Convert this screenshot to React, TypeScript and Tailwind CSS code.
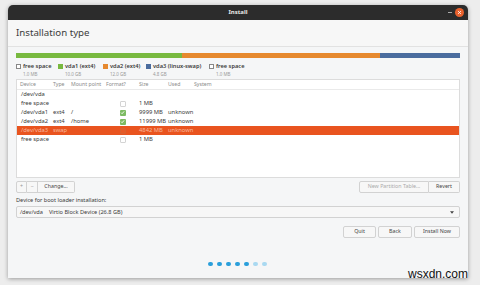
import React from "react";

const legend = [
  { label: "free space", size: "1.0 MB", color: "", w: "w-[42px]" },
  { label: "vda1 (ext4)", size: "10.0 GB", color: "bg-[#78b940]", w: "w-[45px]" },
  { label: "vda2 (ext4)", size: "12.0 GB", color: "bg-[#e6892f]", w: "w-[43px]" },
  { label: "vda3 (linux-swap)", size: "4.8 GB", color: "bg-[#4a6c9e]", w: "w-[63px]" },
  { label: "free space", size: "1.0 MB", color: "", w: "w-[42px]" },
];

const rows = [
  { device: "/dev/vda", type: "", mount: "", fmt: null, size: "", used: "" },
  { device: "free space", type: "", mount: "", fmt: false, size: "1 MB", used: "" },
  { device: "/dev/vda1", type: "ext4", mount: "/", fmt: true, size: "9999 MB", used: "unknown" },
  { device: "/dev/vda2", type: "ext4", mount: "/home", fmt: true, size: "11999 MB", used: "unknown" },
  { device: "/dev/vda3", type: "swap", mount: "", fmt: false, size: "4842 MB", used: "unknown", active: true },
  { device: "free space", type: "", mount: "", fmt: false, size: "1 MB", used: "" },
];

const cols = "grid grid-cols-[33px_18px_35px_33px_29px_26px_1fr] pl-[3px]";

function Check({ on, active }: { on: boolean; active?: boolean }) {
  if (on) {
    return (
      <div className="w-[6px] h-[6px] rounded-[1px] bg-[#7dbb63] flex items-center justify-center">
        <svg width="5" height="5" viewBox="0 0 10 10">
          <path d="M2 5.2 L4.2 7.4 L8.2 2.8" stroke="#fff" strokeWidth="1.8" fill="none" />
        </svg>
      </div>
    );
  }
  return (
    <div
      className={
        active
          ? "w-[6px] h-[6px] rounded-[1px] border border-[#d8602f] bg-[#e65a27]"
          : "w-[6px] h-[6px] rounded-[1px] border border-[#d4d4d4] bg-white"
      }
    />
  );
}

function Btn({ children, className }: { children: React.ReactNode; className?: string }) {
  return (
    <div
      className={
        "h-[12px] flex items-center justify-center border border-[#d2d2d2] bg-[#f7f7f7] rounded-[2px] text-[5.3px] text-[#444] " +
        (className || "")
      }
    >
      {children}
    </div>
  );
}

export default function App() {
  return (
    <div className="relative w-[480px] h-[285px] bg-[#ededed] overflow-hidden pt-[5px] pl-[8px] font-['Noto_Sans','Open_Sans',sans-serif]">
      <div className="w-[460px] h-[273px] flex flex-col rounded-t-[5px] overflow-hidden shadow-[0_1px_4px_rgba(0,0,0,0.35)]">
        <div className="relative h-[15px] bg-[#2c2c2c] flex items-center justify-center">
          <span className="text-[6px] font-bold text-[#e8e8e8]">Install</span>
          <div className="absolute right-[16px] top-[7px] w-[4px] h-[1px] bg-[#aaa]" />
          <div className="absolute right-[4px] top-[3px] w-[9px] h-[9px] rounded-full bg-[#e9622e] flex items-center justify-center">
            <svg width="5" height="5" viewBox="0 0 10 10">
              <path d="M2 2 L8 8 M8 2 L2 8" stroke="#fff" strokeWidth="1.6" />
            </svg>
          </div>
        </div>

        <div className="h-[27px] bg-[#f7f7f7] border-b border-[#e2e2e2] flex items-center px-[8px]">
          <span className="text-[9.7px] text-[#3c3c3c]">Installation type</span>
        </div>

        <div className="flex-1 bg-[#f5f6f7] px-[8px] pt-[6px] flex flex-col">
          <div className="h-[5px] flex">
            <div className="w-[166px] bg-[#78b940]" />
            <div className="w-[198px] bg-[#e6892f]" />
            <div className="flex-1 bg-[#4a6c9e]" />
          </div>

          <div className="flex mt-[3px] h-[18px]">
            {legend.map((l, i) => (
              <div key={i} className={"flex gap-[2px] " + l.w}>
                <div
                  className={
                    l.color
                      ? "w-[5px] h-[5px] mt-[3px] " + l.color
                      : "w-[5px] h-[5px] mt-[3px] border border-[#888] bg-white"
                  }
                />
                <div className="flex flex-col">
                  <span className="text-[5.7px] leading-[10px] font-semibold text-[#3a3a3a] whitespace-nowrap">{l.label}</span>
                  <span className="text-[4.5px] leading-[6px] text-[#999]">{l.size}</span>
                </div>
              </div>
            ))}
          </div>

          <div className="h-[99px] bg-white border border-[#dcdcdc] text-[5.8px] text-[#3a3a3a]">
            <div className={cols + " h-[10px] items-center border-b border-[#eaeaea] text-[5.2px] text-[#8a8a8a] whitespace-nowrap"}>
              <span>Device</span>
              <span>Type</span>
              <span>Mount point</span>
              <span>Format?</span>
              <span>Size</span>
              <span>Used</span>
              <span>System</span>
            </div>
            {rows.map((r, i) => (
              <div
                key={i}
                className={
                  cols +
                  " h-[9px] items-center whitespace-nowrap " +
                  (r.active ? "bg-[#e9541f] text-[#f7b99e]" : "")
                }
              >
                <span className="pl-[1px]">{r.device}</span>
                <span>{r.type}</span>
                <span>{r.mount}</span>
                <span className="flex justify-center">
                  {r.fmt !== null && <Check on={!!r.fmt} active={r.active} />}
                </span>
                <span>{r.size}</span>
                <span>{r.used}</span>
                <span></span>
              </div>
            ))}
          </div>

          <div className="flex mt-[3px]">
            <Btn className="w-[11px] rounded-r-none text-[#999]">+</Btn>
            <Btn className="w-[11px] rounded-none border-l-0 text-[#999]">−</Btn>
            <Btn className="w-[37px] rounded-l-none border-l-0">Change...</Btn>
            <div className="flex-1" />
            <Btn className="w-[70px] rounded-r-none text-[#aaa]">New Partition Table...</Btn>
            <Btn className="w-[31px] rounded-l-none border-l-0">Revert</Btn>
          </div>

          <div className="text-[5.6px] text-[#3a3a3a] mt-[3px] leading-[9px]">Device for boot loader installation:</div>

          <div className="h-[12px] mt-[1px] border border-[#d2d2d2] bg-[#f7f7f7] rounded-[2px] flex items-center pl-[3px] pr-[5px] text-[5.6px] text-[#3a3a3a] whitespace-nowrap">
            <span className="w-[29px]">/dev/vda</span>
            <span>Virtio Block Device (26.8 GB)</span>
            <div className="flex-1" />
            <svg width="4" height="3" viewBox="0 0 8 5">
              <path d="M0 0 L8 0 L4 5 Z" fill="#444" />
            </svg>
          </div>

          <div className="flex justify-end gap-[2px] mt-[8px]">
            <Btn className="w-[33px]">Quit</Btn>
            <Btn className="w-[34px]">Back</Btn>
            <Btn className="w-[46px]">Install Now</Btn>
          </div>

          <div className="flex justify-center gap-[4px] mt-[24px] pr-[2px]">
            {[0, 1, 2, 3, 4, 5, 6].map((d) => (
              <div
                key={d}
                className={d < 5 ? "w-[5px] h-[4px] rounded-full bg-[#2a9fdb]" : "w-[5px] h-[4px] rounded-full bg-[#a9d9f1]"}
              />
            ))}
          </div>
        </div>
      </div>

      <div className="absolute right-[12px] bottom-[5px] text-[12px] leading-[12px] text-[#111] font-['Liberation_Sans',Arial,sans-serif]">
        wsxdn.com
      </div>
    </div>
  );
}
